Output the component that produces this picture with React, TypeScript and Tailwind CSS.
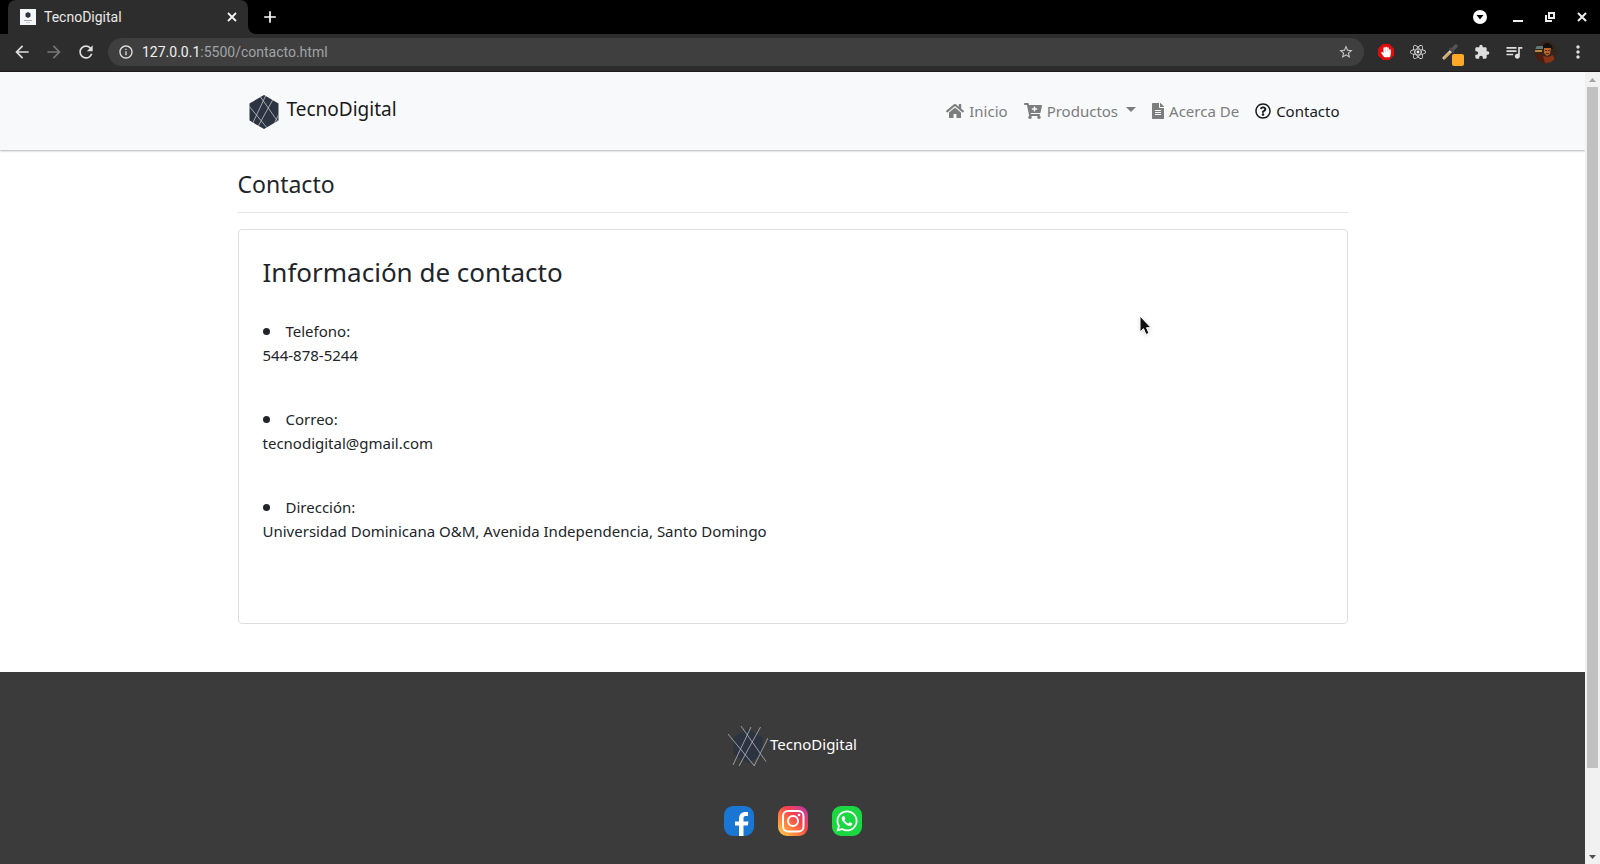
import React, { useId } from "react";
import { FaHome, FaCartPlus, FaFileAlt, FaRegQuestionCircle, FaReact, FaWhatsapp, FaHandPaper } from "react-icons/fa";
import {
  MdArrowBack,
  MdArrowForward,
  MdRefresh,
  MdInfoOutline,
  MdStarBorder,
  MdExtension,
  MdQueueMusic,
  MdMoreVert,
  MdAdd,
} from "react-icons/md";

function Logo({ dark = false }: { dark?: boolean }) {
  const line = dark ? "#b4b8bd" : "#c3c6ca";
  const clip = useId();
  return (
    <svg viewBox="0 0 40 40" className="size-10 shrink-0" aria-hidden="true">
      <clipPath id={clip}>
        <path d="M20 3 34.5 11.5v17L20 37 5.5 28.5v-17z" />
      </clipPath>
      <path d="M20 3 34.5 11.5v17L20 37 5.5 28.5v-17z" fill="#2d3441" />
      <g stroke={line} strokeWidth="0.8" fill="none" clipPath={dark ? undefined : `url(#${clip})`}>
        <path d="M0 8 26.500 40M13 0 38 35.500M23 1 5 39M32.500 1 11 40M40 12 26 40" />
      </g>
    </svg>
  );
}

function ToolButton({ label, children }: { label: string; children: React.ReactNode }) {
  return (
    <button type="button" aria-label={label} className="relative flex size-8 shrink-0 items-center justify-center text-[#dedede]">
      {children}
    </button>
  );
}

function TabStrip() {
  return (
    <div className="flex h-[34px] shrink-0 items-center bg-black pr-0.5 pl-2">
      <div className="relative flex h-full w-60 items-center rounded-t-lg bg-[#2d2d2d] pr-2.5 pl-3">
        <svg viewBox="0 0 16 16" className="size-4" aria-hidden="true">
          <path fill="#f4f5f6" d="M0 0h16v16H0z" />
          <path fill="#2d3441" d="m8 3 2.500 1.500v3L8 9 5.500 7.500v-3z" />
          <path fill="#aaa" d="M4 11h8v1H4zM6 13h4v.5H6z" />
        </svg>
        <span className="ml-2 flex-1 text-sm text-[#e8e8e8]">TecnoDigital</span>
        <button type="button" aria-label="Cerrar pestaña" className="flex size-3 items-center justify-center">
          <svg viewBox="0 0 10 10" className="size-2.5" stroke="#f4f4f4" strokeWidth="1.8">
            <path d="m1 1 8 8M9 1 1 9" />
          </svg>
        </button>
        <svg viewBox="0 0 8 8" className="absolute bottom-0 left-full size-2" aria-hidden="true">
          <path fill="#2d2d2d" d="M0 0a8 8 0 0 0 8 8H0z" />
        </svg>
      </div>
      <button type="button" aria-label="Nueva pestaña" className="ml-3 text-white">
        <MdAdd className="size-5" />
      </button>
      <div className="ml-auto flex items-center">
        <span className="mr-1.5 flex">
          <ToolButton label="Buscar pestañas">
            <svg viewBox="0 0 14 14" className="size-3.5">
              <circle cx="7" cy="7" r="7" fill="#fff" />
              <path d="M3.500 5h7L7 9.500z" fill="#000" />
            </svg>
          </ToolButton>
        </span>
        <ToolButton label="Minimizar">
          <svg viewBox="0 0 10 10" className="size-2.5">
            <path d="M0 8h10v2H0z" fill="#eee" />
          </svg>
        </ToolButton>
        <ToolButton label="Restaurar">
          <svg viewBox="0 0 10 10" className="size-2.5" fill="none" stroke="#eee" strokeWidth="2">
            <path d="M4 1h5v5H4z" />
            <path d="M1 3v6h6" />
          </svg>
        </ToolButton>
        <ToolButton label="Cerrar">
          <svg viewBox="0 0 10 10" className="size-2.5" stroke="#eee" strokeWidth="2">
            <path d="m1 1 8 8M9 1 1 9" />
          </svg>
        </ToolButton>
      </div>
    </div>
  );
}

function Toolbar() {
  return (
    <div className="flex h-[38px] shrink-0 items-center border-b border-[#1f1b1c] bg-[#2d2d2d] px-1.5 pb-px">
      <ToolButton label="Atrás">
        <MdArrowBack className="size-5" />
      </ToolButton>
      <ToolButton label="Adelante">
        <MdArrowForward className="size-5 text-[#757575]" />
      </ToolButton>
      <ToolButton label="Recargar">
        <MdRefresh className="size-5" />
      </ToolButton>
      <div className="mx-1.5 flex h-7 flex-1 items-center rounded-full bg-[#3f3f3f] px-2.5">
        <MdInfoOutline className="size-4 text-[#e0e0e0]" />
        <span className="ml-2 flex-1 text-sm text-[#a3a3a3]">
          <span className="text-[#f0f0f0]">127.0.0.1</span>:5500/contacto.html
        </span>
        <button type="button" aria-label="Añadir a marcadores" className="text-[#c8c8c8]">
          <MdStarBorder className="size-4" />
        </button>
      </div>
      <ToolButton label="Bloqueador de anuncios">
        <svg viewBox="0 0 16 16" className="size-4">
          <path d="M4.700 0h6.600L16 4.700v6.600L11.300 16H4.700L0 11.300V4.700z" fill="#e40d0d" />
          <FaHandPaper x="2.500" y="2.500" size={11} color="#fff" />
        </svg>
      </ToolButton>
      <ToolButton label="React">
        <FaReact className="size-4 text-[#f0f0f0]" />
      </ToolButton>
      <ToolButton label="Cuentagotas">
        <svg viewBox="0 0 16 16" className="size-4">
          <path d="M2 14 9 7" stroke="#d8d4ca" strokeWidth="3" strokeLinecap="round" />
          <path d="M2.500 14 7 9.500" stroke="#d8a252" strokeWidth="2" strokeLinecap="round" />
          <path d="m10 6 4-4" stroke="#555" strokeWidth="3.500" strokeLinecap="round" />
          <path d="m8 4.500 3.500 3.500" stroke="#484848" strokeWidth="2" strokeLinecap="round" />
        </svg>
        <span className="absolute right-0.5 bottom-0.5 size-3 rounded-xs bg-[#ffa726]" />
      </ToolButton>
      <ToolButton label="Extensiones">
        <MdExtension className="size-4" />
      </ToolButton>
      <ToolButton label="Multimedia">
        <MdQueueMusic className="size-5" />
      </ToolButton>
      <ToolButton label="Perfil">
        <svg viewBox="0 0 22 22" className="size-[22px] rounded-full">
          <path fill="#33261d" d="M0 0h22v22H0z" />
          <path fill="#5f7a7c" d="M0 5h8v3H0z" />
          <path fill="#b98a3c" d="M0 9h7v2H0z" />
          <path fill="#4a1d10" d="M0 13h9l4 9H0z" />
          <path fill="#15100f" d="M8 4q5-5 9 1l1 3H8z" />
          <path fill="#b8642c" d="M9 7h7l-1 6-3 2-3-3z" />
          <path fill="#8a3416" d="m8 15 5 1 5-2 3 8H10z" />
          <path fill="#5a2c16" d="M10 9h2v1h-2zM13 9h2v1h-2zM11 12h3v1h-3z" />
        </svg>
      </ToolButton>
      <ToolButton label="Menú">
        <MdMoreVert className="size-5" />
      </ToolButton>
    </div>
  );
}

function NavLink({ icon, label, active, caret }: { icon: React.ReactNode; label: string; active?: boolean; caret?: boolean }) {
  return (
    <a
      href="#"
      className={active ? "flex items-center gap-[5px] p-2 text-[#191a1a]" : "flex items-center gap-[5px] p-2 text-[#7c7d7d]"}
    >
      {icon}
      <span>{label}</span>
      {caret && (
        <svg viewBox="0 0 10 5" className="mb-1 ml-[3px] h-[5px] w-2.5" aria-hidden="true">
          <path d="M0 0h10L5 5z" fill="currentColor" />
        </svg>
      )}
    </a>
  );
}

function Navbar() {
  return (
    <header className="relative bg-[#f8f9fa] pt-[19px] pb-[17px] shadow-[0_1px_2px_rgba(0,0,0,0.3)]">
      <div className="mx-auto flex max-w-[1110px] items-center justify-between">
        <a href="#" className="ml-1.5 flex h-[42px] items-center gap-[3px] text-[19px] leading-9 text-[#191a1a]">
          <Logo />
          <span className="pb-1.5">TecnoDigital</span>
        </a>
        <nav className="flex pb-0.5 leading-6">
          <NavLink icon={<FaHome className="h-4 w-[18px]" />} label="Inicio" />
          <NavLink icon={<FaCartPlus className="h-4 w-[18px]" />} label="Productos" caret />
          <NavLink icon={<FaFileAlt className="h-4 w-3" />} label="Acerca De" />
          <NavLink icon={<FaRegQuestionCircle className="size-4" />} label="Contacto" active />
        </nav>
      </div>
    </header>
  );
}

const contactInfo = [
  { label: "Telefono:", value: "544-878-5244" },
  { label: "Correo:", value: "tecnodigital@gmail.com" },
  { label: "Dirección:", value: "Universidad Dominicana O&M, Avenida Independencia, Santo Domingo" },
];

function ContactCard() {
  return (
    <section className="mt-4 rounded-sm border border-[#dfdfdf] px-6 pt-6 pb-10">
      <h2 className="mb-[29px] text-[26px] leading-9">Información de contacto</h2>
      <ul>
        {contactInfo.map((item) => (
          <li key={item.label} className="mb-10 leading-6">
            <div className="flex items-center gap-4">
              <span className="size-[7px] rounded-full bg-[#212529]" />
              <span>{item.label}</span>
            </div>
            <p>{item.value}</p>
          </li>
        ))}
      </ul>
    </section>
  );
}

function Footer() {
  const gradient = useId();
  return (
    <footer className="mt-12 flex flex-1 flex-col items-center bg-[#3b3b3b] pt-[54px] text-white">
      <a href="#" className="flex items-center gap-0.5">
        <Logo dark />
        <span className="pb-1">TecnoDigital</span>
      </a>
      <div className="mt-10 flex gap-6">
        <a href="#" aria-label="Facebook">
          <svg viewBox="0 0 30 30" className="size-[30px]">
            <rect width="30" height="30" rx="9" fill="#1976d2" />
            <path fill="#fff" d="M15 30V19.500h-4v-4h4V13c0-4.500 2.500-7 6.500-7H24v4h-2.500C20 10 19.500 11 19.500 12.500v3h5l-.7 4h-4.300V30z" />
          </svg>
        </a>
        <a href="#" aria-label="Instagram">
          <svg viewBox="0 0 30 30" className="size-[30px]" fill="none">
            <defs>
              <linearGradient id={gradient} x1="0" y1="1" x2="1" y2="0">
                <stop offset="0" stopColor="#ffd54f" />
                <stop offset="0.3" stopColor="#ff8a3d" />
                <stop offset="0.6" stopColor="#f8434a" />
                <stop offset="1" stopColor="#b637b8" />
              </linearGradient>
            </defs>
            <rect width="30" height="30" rx="9" fill={`url(#${gradient})`} />
            <g stroke="#fff" strokeWidth="2">
              <rect x="5" y="5" width="20.500" height="20.500" rx="5" />
              <circle cx="15" cy="15" r="5" />
            </g>
            <circle cx="21" cy="9" r="1.300" fill="#fff" />
          </svg>
        </a>
        <a href="#" aria-label="WhatsApp">
          <svg viewBox="0 0 30 30" className="size-[30px]">
            <rect width="30" height="30" rx="9" fill="#1bd741" />
            <FaWhatsapp x="3" y="3" size={24} color="#fff" />
          </svg>
        </a>
      </div>
    </footer>
  );
}

function Scrollbar() {
  return (
    <div className="flex w-[15px] shrink-0 flex-col items-center bg-[#f1f1f1]" aria-hidden="true">
      <svg viewBox="0 0 15 15" className="size-[15px]">
        <path d="M4 10h7L7.500 6z" fill="#a3a3a3" />
      </svg>
      <div className="w-[11px] flex-[681] bg-[#c1c1c1]" />
      <div className="flex-[81]" />
      <svg viewBox="0 0 15 15" className="size-[15px]">
        <path d="M4 6h7l-3.500 4z" fill="#505050" />
      </svg>
    </div>
  );
}

export default function App() {
  return (
    <div className="flex h-screen flex-col overflow-hidden font-[Roboto,sans-serif]">
      <TabStrip />
      <Toolbar />
      <div className="relative flex min-h-0 flex-1 bg-white font-['Noto_Sans',sans-serif] text-[15px] text-[#212529]">
        <div className="flex min-w-0 flex-1 flex-col overflow-hidden">
          <Navbar />
          <main className="mx-auto w-full max-w-[1110px]">
            <h1 className="border-b border-[#e3e3e3] pt-[18px] pb-3 text-[23px] leading-8">Contacto</h1>
            <ContactCard />
          </main>
          <Footer />
        </div>
        <Scrollbar />
        <svg viewBox="0 0 13 21" className="absolute top-[243px] left-[1139px] h-[21px] w-[13px] drop-shadow" aria-hidden="true">
          <path d="M1 1v16l3.500-3.300L7 19.500l3-1.300-2.500-5.500H12z" fill="#111" stroke="#fff" strokeWidth="1" />
        </svg>
      </div>
    </div>
  );
}
